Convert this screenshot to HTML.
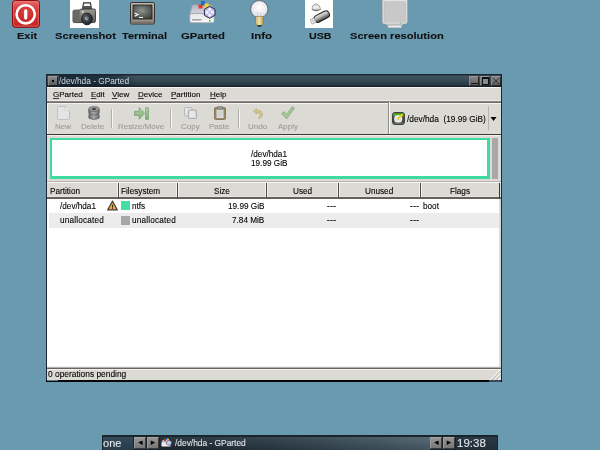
<!DOCTYPE html>
<html><head><meta charset="utf-8">
<style>
*{margin:0;padding:0;box-sizing:border-box}
html,body{width:600px;height:450px;overflow:hidden}
#root{position:absolute;left:0;top:0;width:600px;height:450px;will-change:transform}
body{background:#6a9ab0;position:relative;font-family:"Liberation Sans",sans-serif;font-size:8px;color:#000}
.a{position:absolute;white-space:pre;line-height:1;-webkit-text-stroke:0.1px currentColor}
.lbl{position:absolute;font-weight:bold;font-size:9.6px;color:#111;white-space:pre;line-height:1;transform-origin:0 0;-webkit-text-stroke:0.1px #111}
.ico{position:absolute}
/* window */
.menu{position:absolute;top:4px;font-size:8px;color:#000}
u{text-decoration:underline;text-decoration-thickness:1px;text-underline-offset:1px;text-decoration-color:#3a3a3a}
.tb{position:absolute;top:36px;font-size:8px;color:#9b9a97}
.tbt{font-size:8px;color:#9b9a97}
.hs{position:absolute;top:183px;width:3px;height:14px;margin-left:-1px;border-left:1px solid #f4f3f1;border-right:1px solid #f4f3f1;background:#4a4844}
.tbtn{position:absolute;top:437px;width:12px;height:12px;background:linear-gradient(#959595,#777);border:1px solid #3a3a3a;border-top-color:#a4a4a4;border-left-color:#9c9c9c}
.sep{position:absolute;width:2px;border-left:1px solid #b0aea8;border-right:1px solid #f6f5f3}
</style></head><body><div id="root">

<!-- desktop icons -->
<svg class="ico" style="left:12px;top:0" width="28" height="28" viewBox="0 0 28 28">
  <defs>
    <linearGradient id="rg" x1="0" y1="0" x2="0" y2="1"><stop offset="0" stop-color="#e56c6a"/><stop offset="0.35" stop-color="#d63838"/><stop offset="1" stop-color="#c82222"/></linearGradient>
    <radialGradient id="rg2" cx="0.5" cy="0.35" r="0.6"><stop offset="0" stop-color="#e04848"/><stop offset="1" stop-color="#c42020"/></radialGradient>
  </defs>
  <rect x="0.5" y="0.5" width="27" height="26.8" rx="2.8" fill="url(#rg)" stroke="#8e0c0c"/>
  <rect x="1.7" y="1.7" width="24.6" height="24.4" rx="2" fill="none" stroke="#f08a8a" stroke-width="0.9" opacity="0.6"/>
  <circle cx="13.7" cy="14.3" r="9.1" fill="url(#rg2)" stroke="#fff" stroke-width="2.6"/>
  <rect x="12.1" y="9.3" width="3.2" height="10.2" rx="1.6" fill="#fff"/>
</svg>
<div class="lbl" style="left:17.3px;top:30.5px;transform:scaleX(1.14)">Exit</div>

<svg class="ico" style="left:70px;top:0" width="29" height="28" viewBox="0 0 29 28">
  <defs>
    <linearGradient id="cb" x1="0" y1="0" x2="0" y2="1"><stop offset="0" stop-color="#9a9994"/><stop offset="1" stop-color="#5e5d58"/></linearGradient>
    <radialGradient id="cl" cx="0.4" cy="0.4" r="0.6"><stop offset="0" stop-color="#8a929c"/><stop offset="0.6" stop-color="#3a4048"/><stop offset="1" stop-color="#1e2228"/></radialGradient>
  </defs>
  <rect width="29" height="28" fill="#fff"/>
  <path d="M12.6 8.6 L13.6 2.9 L20.4 2.9 L21.4 8.6 Z" fill="#f4f4f4" stroke="#2e2e2e" stroke-width="1.1"/>
  <rect x="12.8" y="6" width="8.4" height="3" fill="#555"/>
  <path d="M3 11.5 Q3 10.2 4.5 10.2 L10 10 L10.5 9.2 L24 9 Q25.6 9 25.6 10.6 L25.4 21 Q25.4 22.6 23.8 22.6 L4.6 22.6 Q3 22.6 3 21 Z" fill="url(#cb)" stroke="#2a2a28" stroke-width="0.8"/>
  <path d="M3.4 11.5 Q3.4 10.6 4.6 10.6 L9.6 10.6 L9.6 22.2 L4.6 22.2 Q3.4 22.2 3.4 21 Z" fill="#6a6862"/>
  <ellipse cx="17" cy="19" rx="5.3" ry="5.8" fill="url(#cl)" stroke="#161a1e" stroke-width="0.9"/>
  <ellipse cx="17" cy="19" rx="3" ry="3.4" fill="none" stroke="#2a2e34" stroke-width="0.7"/>
  <path d="M15 17.5 L17.5 20" stroke="#c8ccd4" stroke-width="1"/>
  <rect x="11.5" y="11" width="2.2" height="1.6" fill="#ddd"/>
</svg>
<div class="lbl" style="left:55.4px;top:30.5px;transform:scaleX(1.165)">Screenshot</div>

<svg class="ico" style="left:130px;top:2px" width="25" height="23" viewBox="0 0 25 23">
  <defs>
    <radialGradient id="ts" cx="0.45" cy="0.4" r="0.7"><stop offset="0" stop-color="#8e938c"/><stop offset="1" stop-color="#3a3d3a"/></radialGradient>
    <linearGradient id="tb" x1="0" y1="0" x2="0" y2="1"><stop offset="0" stop-color="#c4beb4"/><stop offset="1" stop-color="#8d877d"/></linearGradient>
  </defs>
  <rect x="0.5" y="0.5" width="24" height="21.5" rx="1.5" fill="url(#tb)" stroke="#34322f"/>
  <rect x="3" y="3" width="19" height="14" fill="url(#ts)" stroke="#1e1e1e" stroke-width="0.8"/>
  <path d="M4.6 11 L8 12.6 L4.6 14.2" fill="none" stroke="#fff" stroke-width="1.1"/>
  <rect x="9" y="15" width="4" height="1" fill="#fff"/>
  <rect x="1" y="19.5" width="23" height="2" fill="#7a756c"/>
</svg>
<div class="lbl" style="left:121.8px;top:30.5px;transform:scaleX(1.145)">Terminal</div>

<svg class="ico" style="left:189px;top:0" width="28" height="24" viewBox="0 0 28 24">
  <defs>
    <linearGradient id="gd" x1="0" y1="0" x2="0" y2="1"><stop offset="0" stop-color="#b4b2c6"/><stop offset="1" stop-color="#d6d4e2"/></linearGradient>
    <linearGradient id="gf" x1="0" y1="0" x2="0" y2="1"><stop offset="0" stop-color="#e4e4e8"/><stop offset="1" stop-color="#fafafa"/></linearGradient>
  </defs>
  <path d="M1 14 L3.5 5 L22.5 5 L25 14 Z" fill="url(#gd)" stroke="#a8a6b4" stroke-width="0.6"/>
  <rect x="0.8" y="13.5" width="24.4" height="9.3" rx="2" fill="url(#gf)" stroke="#a09ea8" stroke-width="0.8"/>
  <rect x="3" y="19" width="9.5" height="1.6" fill="#a4a4a4"/>
  <rect x="20" y="20" width="1.6" height="1.6" fill="#2c2"/>
  <rect x="9.5" y="4.5" width="4" height="4" fill="#e53a1e"/>
  <rect x="12" y="1" width="4" height="4.5" fill="#2a68c8"/>
  <rect x="15.5" y="3.5" width="4.2" height="4" fill="#f2d624"/>
  <path d="M20.7 6.3 L26 9.3 L26 15.3 L20.7 18.3 L15.4 15.3 L15.4 9.3 Z" fill="#b8b8e8" stroke="#2a2a44" stroke-width="1"/>
  <circle cx="20.7" cy="9.5" r="1.7" fill="#eeeeff"/><circle cx="20.7" cy="15.1" r="1.7" fill="#eeeeff"/>
  <circle cx="18" cy="12.3" r="1.7" fill="#eeeeff"/><circle cx="23.4" cy="12.3" r="1.7" fill="#eeeeff"/>
</svg>
<div class="lbl" style="left:181.4px;top:30.5px;transform:scaleX(1.18)">GParted</div>

<svg class="ico" style="left:250px;top:0" width="19" height="27" viewBox="0 0 19 27">
  <defs><radialGradient id="bulb" cx="0.5" cy="0.4" r="0.6"><stop offset="0" stop-color="#ffffff"/><stop offset="0.7" stop-color="#e8e8f0"/><stop offset="1" stop-color="#c4c4d0"/></radialGradient>
  <linearGradient id="bb" x1="0" y1="0" x2="1" y2="0"><stop offset="0" stop-color="#c8b070"/><stop offset="0.5" stop-color="#f0e2a8"/><stop offset="1" stop-color="#b89c58"/></linearGradient></defs>
  <circle cx="9.3" cy="9.3" r="8.7" fill="url(#bulb)" stroke="#4a4a50" stroke-width="0.7"/>
  <path d="M5.5 16.5 L13.3 16.5 L13.3 23.5 L11.5 26 L7.5 26 L5.5 23.5 Z" fill="url(#bb)" stroke="#7a6a38" stroke-width="0.5"/>
  <path d="M7 25 L12 25 L11 26.8 L8 26.8Z" fill="#333"/>
  <path d="M7.5 12 L8 15.5 M11 12 L10.5 15.5" stroke="#aaa" stroke-width="0.5"/>
</svg>
<div class="lbl" style="left:251.4px;top:30.5px;transform:scaleX(1.2)">Info</div>

<svg class="ico" style="left:305px;top:0" width="28" height="28" viewBox="0 0 28 28">
  <defs>
    <linearGradient id="us" x1="0" y1="0" x2="0" y2="1"><stop offset="0" stop-color="#f0f0f0"/><stop offset="0.5" stop-color="#a8a8a8"/><stop offset="1" stop-color="#3a3a3a"/></linearGradient>
    <linearGradient id="uc" x1="0" y1="0" x2="0" y2="1"><stop offset="0" stop-color="#d8d8d8"/><stop offset="0.6" stop-color="#f4f4f4"/><stop offset="1" stop-color="#6a6a6a"/></linearGradient>
  </defs>
  <rect width="28" height="28" fill="#fff"/>
  <path d="M7.3 10 Q6.5 5 10.5 4 Q14.5 3.8 15.5 9.5 Q12 12.2 7.3 10Z" fill="url(#uc)" stroke="#666" stroke-width="0.6"/>
  <g transform="translate(16.8 16.6) rotate(-27)">
    <rect x="-8" y="-3.6" width="16" height="7.2" rx="3.2" fill="url(#us)" stroke="#1a1a1a" stroke-width="1"/>
    <rect x="-12" y="-2.4" width="4.5" height="4.8" fill="#f6f6f6" stroke="#8a8a8a" stroke-width="0.6"/>
    <path d="M-11.8 0 H-7.7 M-9.8 -2.2 V2.2" stroke="#aaa" stroke-width="0.5"/>
  </g>
</svg>
<div class="lbl" style="left:308.9px;top:30.5px;transform:scaleX(1.11)">USB</div>

<svg class="ico" style="left:382px;top:0" width="26" height="28" viewBox="0 0 26 28">
  <rect x="0.3" y="-2" width="25" height="24.7" rx="1" fill="#e4e2e2" stroke="#b8a8a8" stroke-width="0.6"/>
  <rect x="2" y="1.8" width="21.5" height="19.8" fill="#c8c8c8" stroke="#b4b4b4" stroke-width="0.5"/>
  <rect x="1" y="21.5" width="23.5" height="2.5" fill="#d2d2d2"/>
  <rect x="18" y="22.5" width="1.5" height="1.2" fill="#8c8"/>
  <rect x="4" y="24" width="17" height="1.3" fill="#c0c0c0"/>
  <rect x="6" y="25.2" width="13.5" height="2.5" rx="0.5" fill="#eeeeee" stroke="#aaa" stroke-width="0.5"/>
</svg>
<div class="lbl" style="left:349.5px;top:30.5px;transform:scaleX(1.156)">Screen resolution</div>

<!-- window -->
<div style="position:absolute;left:46px;top:74px;width:456px;height:308px;background:#1b2631"></div>
<div style="position:absolute;left:47px;top:75px;width:454px;height:12px;background:linear-gradient(180deg,#2a3844 0%,#3e5360 12%,#354955 50%,#25343f 85%,#101820 100%)"></div>
<div style="position:absolute;left:59px;top:75px;width:78px;height:11px;background:linear-gradient(90deg,rgba(18,32,46,0.85),rgba(18,32,46,0.6) 70%,rgba(18,32,46,0))"></div>
<div style="position:absolute;left:48px;top:76px;width:10px;height:10px;background:linear-gradient(#8a8a8a,#5c5c5c);border:1px solid #222;border-top-color:#999;border-left-color:#8c8c8c"><div style="position:absolute;left:3px;top:3px;width:2px;height:2px;background:#000"></div></div>
<div class="a" style="left:59px;top:77px;color:#d4dae0;font-size:8.3px;-webkit-text-stroke:0">/dev/hda - GParted</div>
<div style="position:absolute;left:469px;top:76px;width:10px;height:10px;background:linear-gradient(#858585,#5e5e5e);border:1px solid #2a2a2a;border-top-color:#9a9a9a;border-left-color:#8a8a8a"><div style="position:absolute;left:1px;top:6px;width:7px;height:1px;background:#151515"></div></div>
<div style="position:absolute;left:480px;top:76px;width:10px;height:10px;background:linear-gradient(#858585,#5e5e5e);border:1px solid #2a2a2a;border-top-color:#9a9a9a;border-left-color:#8a8a8a"><div style="position:absolute;left:1px;top:0px;width:7px;height:8px;border:1px solid #111;border-top-width:2px;background:#8a8a8a"></div></div>
<div style="position:absolute;left:491px;top:76px;width:10px;height:10px;background:linear-gradient(#858585,#5e5e5e);border:1px solid #2a2a2a;border-top-color:#9a9a9a;border-left-color:#8a8a8a"><svg width="8" height="8" style="position:absolute;left:0;top:0"><path d="M0.5 0.5L7.5 7.5M7.5 0.5L0.5 7.5" stroke="#1a1a1a" stroke-width="0.7"/></svg></div>

<!-- client bg -->
<div style="position:absolute;left:47px;top:87px;width:454px;height:293px;background:#dcdad5"></div>
<!-- menubar -->
<div style="position:absolute;left:47px;top:87px;width:454px;height:1px;background:#f6f5f3"></div>
<div style="position:absolute;left:47px;top:100px;width:454px;height:1px;background:#ebe9e5"></div>
<div style="position:absolute;left:47px;top:101px;width:454px;height:1px;background:#8c8984"></div>
<div style="position:absolute;left:47px;top:102px;width:454px;height:1px;background:#6f6f6f"></div>
<div style="position:absolute;left:47px;top:103px;width:454px;height:1px;background:#f4f3ef"></div>
<div class="a" style="left:53px;top:91px"><u>G</u>Parted</div>
<div class="a" style="left:91px;top:91px"><u>E</u>dit</div>
<div class="a" style="left:112px;top:91px"><u>V</u>iew</div>
<div class="a" style="left:138px;top:91px"><u>D</u>evice</div>
<div class="a" style="left:171px;top:91px"><u>P</u>artition</div>
<div class="a" style="left:210px;top:91px"><u>H</u>elp</div>

<!-- toolbar -->
<div style="position:absolute;left:47px;top:104px;width:1px;height:30px;background:#f8f7f5"></div>
<div style="position:absolute;left:47px;top:134px;width:454px;height:1px;background:#3a3a3a"></div>
<div style="position:absolute;left:47px;top:135px;width:454px;height:1px;background:#f2f0ec"></div>
<div class="a tbt" style="left:55px;top:123px">New</div>
<div class="a tbt" style="left:81px;top:123px">Delete</div>
<div class="sep" style="left:111px;top:109px;height:19px"></div>
<div class="a tbt" style="left:118px;top:123px">Resize/Move</div>
<div class="sep" style="left:170px;top:109px;height:19px"></div>
<div class="a tbt" style="left:181px;top:123px">Copy</div>
<div class="a tbt" style="left:209px;top:123px">Paste</div>
<div class="sep" style="left:238px;top:109px;height:19px"></div>
<div class="a tbt" style="left:248px;top:123px">Undo</div>
<div class="a tbt" style="left:278px;top:123px">Apply</div>
<!-- toolbar icons -->
<svg class="ico" style="left:57px;top:106px" width="13" height="14" viewBox="0 0 13 14">
  <path d="M1.5 0.5 H8.3 L12.5 4.7 V12.3 Q12.5 13.5 11.3 13.5 H1.7 Q0.5 13.5 0.5 12.3 V1.7 Q0.5 0.5 1.5 0.5Z" fill="#e4e4e4" stroke="#bdbdbd" stroke-width="0.9"/>
  <path d="M8.3 0.5 V4.7 H12.5" fill="#f4f4f4" stroke="#c4c4c4" stroke-width="0.8"/>
</svg>
<svg class="ico" style="left:88px;top:106px" width="12" height="14" viewBox="0 0 12 14">
  <defs><linearGradient id="tr" x1="0" y1="0" x2="1" y2="0"><stop offset="0" stop-color="#646464"/><stop offset="0.45" stop-color="#a8a8a8"/><stop offset="1" stop-color="#6e6e6e"/></linearGradient></defs>
  <path d="M0.8 3 Q0.4 6.5 1.2 8 Q0.3 11 1 12.3 Q6 14.8 11 12.3 Q11.7 11 10.8 8 Q11.6 6.5 11.2 3 Z" fill="url(#tr)" stroke="#505050" stroke-width="0.6"/>
  <ellipse cx="6" cy="3" rx="5.2" ry="2.4" fill="#9c9c9c" stroke="#555" stroke-width="0.6"/>
  <ellipse cx="6" cy="3" rx="2.2" ry="1.1" fill="#3c3c3c"/>
  <path d="M1.2 8 Q6 10 10.8 8" fill="none" stroke="#5a5a5a" stroke-width="0.6"/>
</svg>
<svg class="ico" style="left:134px;top:107px" width="15" height="13" viewBox="0 0 15 13">
  <defs><linearGradient id="ga" x1="0" y1="0" x2="0" y2="1"><stop offset="0" stop-color="#b2d4a8"/><stop offset="1" stop-color="#7fae74"/></linearGradient></defs>
  <path d="M0.6 4.3 H5.2 V0.6 L10.6 6.3 L5.2 12.2 V8.5 H0.6 Z" fill="url(#ga)" stroke="#6f9a64" stroke-width="0.7" stroke-linejoin="round"/>
  <rect x="11.6" y="0.5" width="2.8" height="12" rx="0.6" fill="url(#ga)" stroke="#6f9a64" stroke-width="0.7"/>
</svg>
<svg class="ico" style="left:184px;top:107px" width="13" height="12" viewBox="0 0 13 12">
  <rect x="0.5" y="0.5" width="7.5" height="8.5" rx="1" fill="#e4e4e4" stroke="#b4b4b4" stroke-width="0.9"/>
  <rect x="4.3" y="3" width="8.2" height="8.5" rx="1" fill="#d6d6d6" stroke="#a8a8a8" stroke-width="0.9"/>
  <rect x="5.5" y="4.3" width="5.8" height="6" fill="#e8e8e8"/>
</svg>
<svg class="ico" style="left:214px;top:106px" width="12" height="14" viewBox="0 0 12 14">
  <rect x="0.5" y="1.5" width="11" height="12" rx="1.2" fill="#9a8766" stroke="#7a6a4c" stroke-width="0.8"/>
  <rect x="2.5" y="3.5" width="7" height="8.5" fill="#dedede"/>
  <path d="M3.5 6 H8.5 M3.5 8 H8.5 M3.5 10 H7" stroke="#b0b0b0" stroke-width="0.6"/>
  <rect x="3.5" y="0.5" width="5" height="2.8" rx="0.6" fill="#9c9c9c" stroke="#6a6a6a" stroke-width="0.6"/>
</svg>
<svg class="ico" style="left:253px;top:108px" width="10" height="11" viewBox="0 0 10 11">
  <path d="M3.6 0.5 L0.5 3.3 L3.6 6 V4.5 Q7.2 4.2 7 7.3 Q6.8 9.3 5.2 10.5 Q9.4 9.8 9.4 6.6 Q9.4 2.2 3.6 2.3 Z" fill="#d2c88e" stroke="#b0a468" stroke-width="0.6"/>
</svg>
<svg class="ico" style="left:281px;top:106px" width="14" height="14" viewBox="0 0 14 14">
  <path d="M0.6 7.6 L3 5.6 L5.6 8.4 L11.4 0.6 L13.4 2.2 L5.6 13 Z" fill="#a6c898" stroke="#82a872" stroke-width="0.8" stroke-linejoin="round"/>
</svg>
<!-- device combo -->
<div style="position:absolute;left:388px;top:102px;width:1px;height:32px;background:#8e8b86"></div>
<div style="position:absolute;left:389px;top:102px;width:1px;height:32px;background:#fbfaf9"></div>
<svg class="ico" style="left:392px;top:112px" width="13" height="13" viewBox="0 0 13 13">
  <rect x="0.6" y="0.6" width="11.8" height="11.8" rx="2" fill="#4a4a4a" stroke="#2e2e2e" stroke-width="0.9"/>
  <path d="M1.2 2.6 Q1.2 1.2 2.6 1.2 H10.4 Q11.8 1.2 11.8 2.6 V4.4 H1.2Z" fill="#52ac22"/>
  <circle cx="6.2" cy="7" r="4.1" fill="#e2e9e0"/>
  <circle cx="6.2" cy="7" r="1.1" fill="#b8c0b8"/>
  <path d="M6.2 6.6 L10 2.6" stroke="#f2d01a" stroke-width="1.8" stroke-linecap="round"/>
  <rect x="1.5" y="10.6" width="10" height="1.4" fill="#6a6a6a"/>
</svg>
<div class="a" style="left:407px;top:115px;font-size:8.3px">/dev/hda  (19.99 GiB)</div>
<div style="position:absolute;left:488px;top:106px;width:1px;height:24px;background:#b5b3ad"></div>
<svg class="ico" style="left:490px;top:117px" width="7" height="4" viewBox="0 0 7 4"><path d="M0.5 0 H6.5 L3.5 4Z" fill="#000"/></svg>

<!-- partition graphic -->
<div style="position:absolute;left:47px;top:136px;width:454px;height:45px;background:#dedad7"></div>
<div style="position:absolute;left:50px;top:138px;width:440px;height:41px;background:#fff;border-style:solid;border-color:#3ddba0;border-width:2px 3px 3px 2px"></div>
<div style="position:absolute;left:492px;top:138px;width:6px;height:41px;background:#a8a8a8"></div>
<div class="a" style="left:251px;top:151px;font-size:8.2px">/dev/hda1</div>
<div class="a" style="left:251px;top:160px;font-size:8.2px">19.99 GiB</div>

<!-- column headers -->
<div style="position:absolute;left:47px;top:181px;width:454px;height:1px;background:#b8b4ae"></div>
<div style="position:absolute;left:47px;top:182px;width:454px;height:1px;background:#f7f6f4"></div>
<div style="position:absolute;left:47px;top:196px;width:454px;height:1px;background:#e6e4e0"></div><div style="position:absolute;left:47px;top:197px;width:454px;height:2px;background:#64615d"></div>
<div style="position:absolute;left:47px;top:199px;width:452px;height:168px;background:#fff"></div>
<div class="hs" style="left:118px"></div>
<div class="hs" style="left:177px"></div>
<div class="hs" style="left:266px"></div>
<div class="hs" style="left:338px"></div>
<div class="hs" style="left:420px"></div>
<div style="position:absolute;left:499px;top:183px;width:1px;height:15px;background:#3c3a36"></div>
<div class="a" style="left:50px;top:188px;font-size:8.2px">Partition</div>
<div class="a" style="left:121px;top:188px;font-size:8.2px">Filesystem</div>
<div class="a" style="left:214px;top:188px;font-size:8.2px">Size</div>
<div class="a" style="left:293px;top:188px;font-size:8.2px">Used</div>
<div class="a" style="left:365px;top:188px;font-size:8.2px">Unused</div>
<div class="a" style="left:450px;top:188px;font-size:8.2px">Flags</div>

<!-- rows -->
<div style="position:absolute;left:49px;top:213px;width:450px;height:15px;background:#ececec"></div>
<div class="a" style="left:60px;top:203px;font-size:8.2px">/dev/hda1</div>
<svg class="ico" style="left:107px;top:200px" width="11" height="11" viewBox="0 0 11 11">
  <path d="M5.5 1.1 L10.3 9.9 H0.7 Z" fill="#f2a634" stroke="#404040" stroke-width="1.15" stroke-linejoin="round"/>
  <path d="M4.9 5 Q5.5 4.4 6.1 5 L5.8 7.9 H5.2 Z" fill="#1e1e1e"/><rect x="5.05" y="8.2" width="0.9" height="0.8" fill="#1e1e1e"/>
</svg>
<div style="position:absolute;left:121px;top:201px;width:9px;height:9px;background:#42dea2"></div>
<div class="a" style="left:132px;top:203px;font-size:8.2px">ntfs</div>
<div class="a" style="left:228px;top:203px;font-size:8.2px">19.99 GiB</div>
<div class="a" style="left:327px;top:203px;font-size:8.2px;letter-spacing:0.4px">---</div>
<div class="a" style="left:410px;top:203px;font-size:8.2px;letter-spacing:0.4px">---</div>
<div class="a" style="left:423px;top:203px;font-size:8.2px">boot</div>

<div class="a" style="left:60px;top:217px;font-size:8.2px;letter-spacing:0.2px">unallocated</div>
<div style="position:absolute;left:121px;top:216px;width:9px;height:9px;background:#a8a8a8"></div>
<div class="a" style="left:132px;top:217px;font-size:8.2px;letter-spacing:0.2px">unallocated</div>
<div class="a" style="left:232px;top:217px;font-size:8.2px">7.84 MiB</div>
<div class="a" style="left:327px;top:217px;font-size:8.2px;letter-spacing:0.4px">---</div>
<div class="a" style="left:410px;top:217px;font-size:8.2px;letter-spacing:0.4px">---</div>

<!-- statusbar -->
<div style="position:absolute;left:47px;top:366px;width:452px;height:1px;background:#eeedeb"></div>
<div style="position:absolute;left:47px;top:367px;width:454px;height:1px;background:#b4b1ac"></div>
<div style="position:absolute;left:47px;top:368px;width:454px;height:1px;background:#686561"></div>
<div style="position:absolute;left:47px;top:369px;width:454px;height:1px;background:#f2f1ee"></div>
<div class="a" style="left:48px;top:370px;font-size:8.4px">0 operations pending</div>
<div style="position:absolute;left:46px;top:380px;width:456px;height:2px;background:#050708"></div>
<div style="position:absolute;left:47px;top:380px;width:11px;height:1px;background:#5a7a90"></div>
<div style="position:absolute;left:489px;top:380px;width:12px;height:2px;background:#3a4a56"></div>
<svg class="ico" style="left:488px;top:369px" width="13" height="11" viewBox="0 0 13 11">
  <path d="M12.5 0.5 L2 11 M12.5 4.5 L6 11 M12.5 8.5 L10 11" stroke="#ffffff" stroke-width="1"/>
  <path d="M13 1.5 L3.5 11 M13 5.5 L7.5 11" stroke="#b8b6b0" stroke-width="1"/>
</svg>

<!-- taskbar -->
<div style="position:absolute;left:102px;top:435px;width:396px;height:15px;background:#1a242c"></div>
<div style="position:absolute;left:103px;top:437px;width:30px;height:13px;background:linear-gradient(180deg,#34495a,#2a3c4a)"></div>
<div class="a" style="left:103px;top:438.5px;font-size:10.4px;transform:scaleX(1.06);transform-origin:0 0;color:#e0e6ea">one</div>
<div class="tbtn" style="left:134px"><svg width="10" height="10" style="position:absolute;left:0;top:0"><path d="M3.2 4.6 L7.6 2.4 V6.9Z" fill="#000"/></svg></div>
<div class="tbtn" style="left:147px"><svg width="10" height="10" style="position:absolute;left:0;top:0"><path d="M7.2 4.6 L2.8 2.4 V6.9Z" fill="#000"/></svg></div>
<div style="position:absolute;left:160px;top:437px;width:270px;height:13px;background:linear-gradient(90deg,#1e2b34 0%,#2a3a45 40%,#3e515d 75%,#4d616d 100%)"></div>
<div style="position:absolute;left:160px;top:437px;width:270px;height:13px;background:linear-gradient(180deg,rgba(255,255,255,0.06),rgba(0,0,0,0.15))"></div>
<svg class="ico" style="left:161px;top:438px" width="11" height="9" viewBox="0 0 11 9">
  <path d="M0.5 4 L1.8 2 H8 L9.3 4 Z" fill="#c7c5d6"/>
  <rect x="0.5" y="4" width="9" height="4.6" rx="0.8" fill="#f0f0f2" stroke="#8a8a90" stroke-width="0.5"/>
  <rect x="3" y="1" width="2" height="2" fill="#e03020"/><rect x="4.4" y="0" width="2" height="2" fill="#2060c0"/><rect x="6" y="0.8" width="2" height="2" fill="#f0d020"/>
  <path d="M8 2.2 L10.6 3.5 V6.1 L8 7.4 L5.4 6.1 V3.5Z" fill="#c8c8ee" stroke="#30304a" stroke-width="0.5"/>
</svg>
<div class="a" style="left:175px;top:439px;font-size:8.4px;color:#e2e6ea">/dev/hda - GParted</div>
<div class="tbtn" style="left:430px"><svg width="10" height="10" style="position:absolute;left:0;top:0"><path d="M3.2 4.6 L7.6 2.4 V6.9Z" fill="#000"/></svg></div>
<div class="tbtn" style="left:443px"><svg width="10" height="10" style="position:absolute;left:0;top:0"><path d="M7.2 4.6 L2.8 2.4 V6.9Z" fill="#000"/></svg></div>
<div style="position:absolute;left:456px;top:437px;width:41px;height:13px;background:linear-gradient(180deg,#2a3944,#222f38)"></div>
<div class="a" style="left:456.5px;top:438.5px;font-size:10px;transform:scaleX(1.15);transform-origin:0 0;color:#e0e6ea">19:38</div>
</div></body></html>
